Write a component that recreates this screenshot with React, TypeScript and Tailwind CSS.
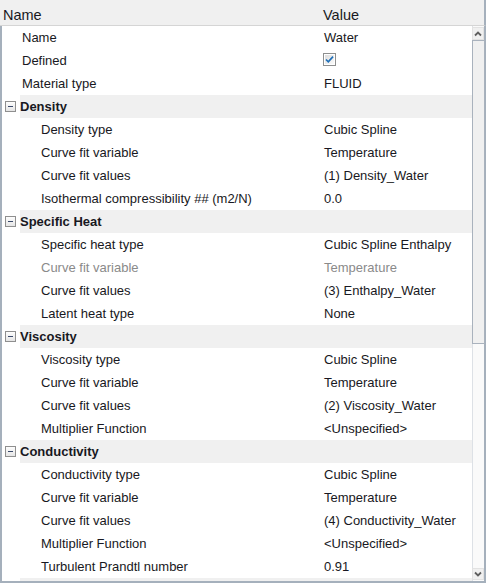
import React from "react";

type Row =
  | { kind: "item"; level: 1 | 2; name: string; value?: string; check?: boolean; disabled?: boolean }
  | { kind: "group"; name: string };

const rows: Row[] = [
  { kind: "item", level: 1, name: "Name", value: "Water" },
  { kind: "item", level: 1, name: "Defined", check: true },
  { kind: "item", level: 1, name: "Material type", value: "FLUID" },
  { kind: "group", name: "Density" },
  { kind: "item", level: 2, name: "Density type", value: "Cubic Spline" },
  { kind: "item", level: 2, name: "Curve fit variable", value: "Temperature" },
  { kind: "item", level: 2, name: "Curve fit values", value: "(1) Density_Water" },
  { kind: "item", level: 2, name: "Isothermal compressibility ## (m2/N)", value: "0.0" },
  { kind: "group", name: "Specific Heat" },
  { kind: "item", level: 2, name: "Specific heat type", value: "Cubic Spline Enthalpy" },
  { kind: "item", level: 2, name: "Curve fit variable", value: "Temperature", disabled: true },
  { kind: "item", level: 2, name: "Curve fit values", value: "(3) Enthalpy_Water" },
  { kind: "item", level: 2, name: "Latent heat type", value: "None" },
  { kind: "group", name: "Viscosity" },
  { kind: "item", level: 2, name: "Viscosity type", value: "Cubic Spline" },
  { kind: "item", level: 2, name: "Curve fit variable", value: "Temperature" },
  { kind: "item", level: 2, name: "Curve fit values", value: "(2) Viscosity_Water" },
  { kind: "item", level: 2, name: "Multiplier Function", value: "<Unspecified>" },
  { kind: "group", name: "Conductivity" },
  { kind: "item", level: 2, name: "Conductivity type", value: "Cubic Spline" },
  { kind: "item", level: 2, name: "Curve fit variable", value: "Temperature" },
  { kind: "item", level: 2, name: "Curve fit values", value: "(4) Conductivity_Water" },
  { kind: "item", level: 2, name: "Multiplier Function", value: "<Unspecified>" },
  { kind: "item", level: 2, name: "Turbulent Prandtl number", value: "0.91" },
  { kind: "group", name: "" },
];

function MinusBox() {
  return (
    <svg width="11" height="11" viewBox="0 0 11 11" className="block">
      <defs>
        <linearGradient id="mb" x1="0" y1="0" x2="0" y2="1">
          <stop offset="0" stopColor="#ffffff" />
          <stop offset="1" stopColor="#e4e4e4" />
        </linearGradient>
      </defs>
      <rect x="0.5" y="0.5" width="10" height="10" fill="url(#mb)" stroke="#8f8f8f" />
      <rect x="3" y="5" width="5" height="1" fill="#3b4a6b" />
    </svg>
  );
}

function CheckBox() {
  return (
    <svg width="13" height="13" viewBox="0 0 13 13" className="block">
      <defs>
        <linearGradient id="cb" x1="0" y1="0" x2="1" y2="1">
          <stop offset="0" stopColor="#dcdcdc" />
          <stop offset="1" stopColor="#fbfbfb" />
        </linearGradient>
      </defs>
      <rect x="0.5" y="0.5" width="12" height="12" fill="#ffffff" stroke="#8e8f8f" />
      <rect x="2" y="2" width="9" height="9" fill="url(#cb)" />
      <path d="M3 6.5 L5.3 8.8 L10 3.6" fill="none" stroke="#1f6fb8" strokeWidth="1.7" />
    </svg>
  );
}

function Chevron({ down }: { down?: boolean }) {
  return (
    <svg width="8" height="6" viewBox="0 0 8 6" className="block">
      <path
        d={down ? "M1 1.5 L4 4.5 L7 1.5" : "M1 4.5 L4 1.5 L7 4.5"}
        fill="none"
        stroke="#5f5f5f"
        strokeWidth="1.8"
      />
    </svg>
  );
}

export default function App() {
  return (
    <div
      className="w-[486px] h-[583px] bg-white flex flex-col overflow-hidden text-[#181822]"
      style={{ fontFamily: '"Liberation Sans", Arial, sans-serif' }}
    >
      {/* header */}
      <div className="h-[26px] shrink-0 flex bg-[#f0f0f0] border-b border-[#d5d5d5] border-r-2 border-r-[#a5b0bc] text-[14.5px] leading-[16px]">
        <div className="w-[320px] pl-[3px] pt-[7px]">Name</div>
        <div className="pl-[3px] pt-[7px]">Value</div>
      </div>
      {/* body */}
      <div className="flex-1 min-h-0 flex border-l-2 border-r-2 border-b-2 border-[#a5b0bc]">
        <div className="flex-1 min-w-0 overflow-hidden text-[13px]">
          {rows.map((r, i) =>
            r.kind === "group" ? (
              <div key={i} className="h-[23px] flex">
                <div className="w-[18px] shrink-0 flex items-center pl-[3px]">
                  {r.name ? <MinusBox /> : null}
                </div>
                <div className="flex-1 bg-[#f0f0f0] flex items-center font-bold leading-[23px]">
                  {r.name}
                </div>
              </div>
            ) : (
              <div
                key={i}
                className={`h-[23px] flex items-center leading-[23px] ${r.disabled ? "text-[#8a8a8a]" : ""}`}
              >
                <div className={`w-[318px] shrink-0 whitespace-nowrap ${r.level === 1 ? "pl-[20px]" : "pl-[39px]"}`}>
                  {r.name}
                </div>
                <div className="pl-[4px] flex items-center whitespace-nowrap">
                  {r.check ? (
                    <div className="ml-[-1px] mt-[-2px]">
                      <CheckBox />
                    </div>
                  ) : (
                    r.value
                  )}
                </div>
              </div>
            )
          )}
        </div>
        {/* scrollbar */}
        <div className="w-[12px] shrink-0 flex flex-col bg-[#fafafa] border-l border-[#dde1e6]">
          <div className="h-[13px] mt-[1px] flex items-center justify-center bg-[#f0f0f0] border border-[#e2e2e2] -ml-px">
            <Chevron />
          </div>
          <div className="h-[304px] bg-[#f0f0f0] border border-[#a9b2bd] -ml-px -mr-px" />
          <div className="flex-1" />
          <div className="h-[12px] mb-[1px] flex items-center justify-center bg-[#f0f0f0] border border-[#e2e2e2] -ml-px">
            <Chevron down />
          </div>
        </div>
      </div>
    </div>
  );
}
